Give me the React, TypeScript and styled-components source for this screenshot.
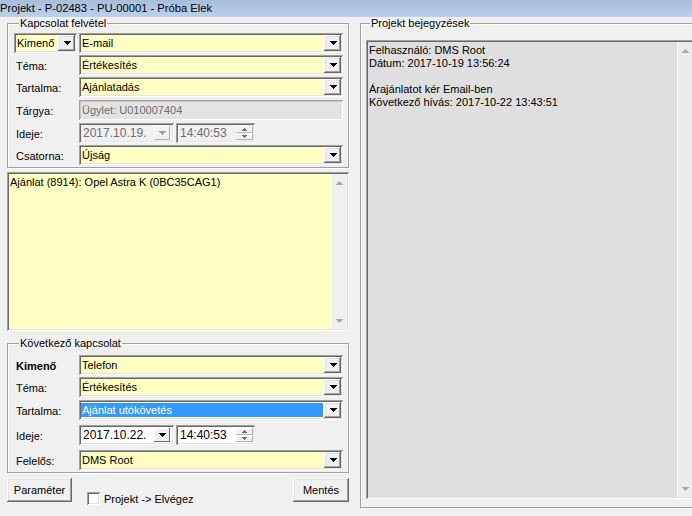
import styled, { createGlobalStyle, css } from "styled-components";

const GlobalStyle = createGlobalStyle`
  html, body {
    margin: 0;
    padding: 0;
    background: #f0f0f0;
  }
  body {
    font-family: "Liberation Sans", Arial, sans-serif;
    font-size: 11px;
    color: #000;
  }
  * {
    box-sizing: border-box;
  }
`;

const sunken = css`
  box-shadow:
    inset 1px 1px 0 #a0a0a0,
    inset -1px -1px 0 #ffffff,
    inset 2px 2px 0 #696969,
    inset -2px -2px 0 #e3e3e3;
`;

const raised = css`
  box-shadow:
    inset -1px -1px 0 #696969,
    inset 1px 1px 0 #ffffff,
    inset -2px -2px 0 #a0a0a0,
    inset 2px 2px 0 #e3e3e3;
`;

const YELLOW = "#ffffc4";

function Arrow({ dir = "down", color = "#000" }: { dir?: "down" | "up"; color?: string }) {
  const d = "M0 0h7v1h-1v1h-1v1h-1v1h-1v-1h-1v-1h-1v-1h-1z";
  return (
    <svg width="7" height="4" viewBox="0 0 7 4" style={dir === "up" ? { transform: "scaleY(-1)" } : undefined}>
      <path d={d} fill={color} />
    </svg>
  );
}

function TinyArrow({ dir }: { dir: "up" | "down" }) {
  return (
    <svg width="5" height="3" viewBox="0 0 5 3">
      <path d={dir === "up" ? "M2 0h1v1h1v1h1v1H0V2h1V1h1z" : "M0 0h5v1H4v1H3v1H2V2H1V1H0z"} fill="#6d6d6d" />
    </svg>
  );
}

function ComboBox({ value, selected, width }: { value: string; selected?: boolean; width?: number }) {
  return (
    <Combo $width={width}>
      <ComboText $selected={selected}>{value}</ComboText>
      <DropButton>
        <Arrow />
      </DropButton>
    </Combo>
  );
}

function DateTime({ date, time, disabled }: { date: string; time: string; disabled?: boolean }) {
  return (
    <DateRow>
      <DateBox $disabled={disabled}>
        <FieldText>{date}</FieldText>
        <SmallDrop $disabled={disabled}>
          <Arrow color={disabled ? "#a0a0a0" : "#000"} />
        </SmallDrop>
      </DateBox>
      <TimeBox $disabled={disabled}>
        <FieldText>{time}</FieldText>
        <Spin>
          <SpinButton>
            <TinyArrow dir="up" />
          </SpinButton>
          <SpinButton>
            <TinyArrow dir="down" />
          </SpinButton>
        </Spin>
      </TimeBox>
    </DateRow>
  );
}

function ScrollBar({ light }: { light?: boolean }) {
  return (
    <ScrollTrack $light={light}>
      <Arrow dir="up" color="#a8a8a8" />
      <Arrow color="#a8a8a8" />
    </ScrollTrack>
  );
}

export default function App() {
  return (
    <Window>
      <GlobalStyle />
      <TitleBar>Projekt - P-02483 - PU-00001 - Próba Elek</TitleBar>
      <Body>
        <LeftColumn>
          <Group $padTop={3} $padBottom={2}>
            <Caption>Kapcsolat felvétel</Caption>
            <Row>
              <LabelCell>
                <ComboBox value="Kimenő" width={63} />
              </LabelCell>
              <ComboBox value="E-mail" />
            </Row>
            <Row $top={2}>
              <Label>Téma:</Label>
              <ComboBox value="Értékesítés" />
            </Row>
            <Row $top={2}>
              <Label>Tartalma:</Label>
              <ComboBox value="Ajánlatadás" />
            </Row>
            <Row $top={3}>
              <Label>Tárgya:</Label>
              <ReadOnlyField>Ügylet: U010007404</ReadOnlyField>
            </Row>
            <Row $top={3}>
              <Label>Ideje:</Label>
              <DateTime date="2017.10.19." time="14:40:53" disabled />
            </Row>
            <Row $top={2}>
              <Label>Csatorna:</Label>
              <ComboBox value="Újság" />
            </Row>
          </Group>

          <Memo $bg={YELLOW} $height={159}>
            <MemoText>Ajánlat (8914): Opel Astra K (0BC35CAG1)</MemoText>
            <ScrollBar />
          </Memo>

          <Group $top={6} $padTop={5} $padBottom={2}>
            <Caption>Következő kapcsolat</Caption>
            <Row>
              <Label $bold>Kimenő</Label>
              <ComboBox value="Telefon" />
            </Row>
            <Row $top={2}>
              <Label>Téma:</Label>
              <ComboBox value="Értékesítés" />
            </Row>
            <Row $top={3}>
              <Label>Tartalma:</Label>
              <ComboBox value="Ajánlat utókövetés" selected />
            </Row>
            <Row $top={5}>
              <Label>Ideje:</Label>
              <DateTime date="2017.10.22." time="14:40:53" />
            </Row>
            <Row $top={5}>
              <Label>Felelős:</Label>
              <ComboBox value="DMS Root" />
            </Row>
          </Group>

          <ButtonBar>
            <PushButton $width={65}>Paraméter</PushButton>
            <CheckItem>
              <CheckBox />
              Projekt -&gt; Elvégez
            </CheckItem>
            <PushButton $width={56}>Mentés</PushButton>
          </ButtonBar>
        </LeftColumn>

        <RightGroup $padTop={10} $padBottom={8}>
          <Caption>Projekt bejegyzések</Caption>
          <Memo $bg="#dfdfdf" $fill>
            <MemoText>
              Felhasználó: DMS Root
              <br />
              Dátum: 2017-10-19 13:56:24
              <br />
              <br />
              Árajánlatot kér Email-ben
              <br />
              Következő hívás: 2017-10-22 13:43:51
            </MemoText>
            <ScrollBar light />
          </Memo>
        </RightGroup>
      </Body>
    </Window>
  );
}

const Window = styled.div`
  width: 692px;
  height: 516px;
  overflow: hidden;
  display: flex;
  flex-direction: column;
  background: #f0f0f0;
`;

const TitleBar = styled.div`
  height: 17px;
  line-height: 16px;
  font-size: 11.2px;
  white-space: nowrap;
  background: linear-gradient(#a6bedc, #bcd0e9);
`;

const Body = styled.div`
  flex: 1;
  display: flex;
  padding-left: 7px;
  gap: 11px;
  overflow: hidden;
`;

const LeftColumn = styled.div`
  width: 342px;
  flex-shrink: 0;
  display: flex;
  flex-direction: column;
`;

const Group = styled.fieldset<{ $top?: number; $padTop: number; $padBottom: number }>`
  margin: ${(p) => p.$top ?? 0}px 0 0 0;
  padding: ${(p) => p.$padTop}px 5px ${(p) => p.$padBottom}px 7px;
  min-inline-size: 0;
  border: 1px solid #a0a0a0;
  box-shadow: inset 1px 1px 0 #fff, 1px 1px 0 #fff;
`;

const RightGroup = styled(Group)`
  width: 341px;
  flex-shrink: 0;
  display: flex;
  flex-direction: column;
  padding-left: 5px;
  margin-bottom: 8px;
`;

const Caption = styled.legend`
  margin-left: 4px;
  padding: 0 1px;
  line-height: 13px;
  color: #000;
`;

const Row = styled.div<{ $top?: number }>`
  display: flex;
  align-items: center;
  height: 20px;
  margin-top: ${(p) => p.$top ?? 0}px;
`;

const Label = styled.div<{ $bold?: boolean }>`
  width: 64px;
  flex-shrink: 0;
  padding-left: 1px;
  padding-top: 2px;
  font-weight: ${(p) => (p.$bold ? 700 : 400)};
`;

const LabelCell = styled.div`
  width: 64px;
  flex-shrink: 0;
  margin-left: -1px;
  margin-right: 1px;
`;

const Combo = styled.div<{ $width?: number }>`
  display: flex;
  height: 20px;
  padding: 2px;
  background: ${YELLOW};
  ${sunken};
  ${(p) => (p.$width ? `width: ${p.$width}px;` : "flex: 1;")}
`;

const ComboText = styled.div<{ $selected?: boolean }>`
  flex: 1;
  margin: 1px 1px 1px 0;
  padding-left: 1px;
  line-height: 14px;
  white-space: nowrap;
  overflow: hidden;
  background: ${(p) => (p.$selected ? "#3399ff" : "transparent")};
  color: ${(p) => (p.$selected ? "#fff" : "#000")};
`;

const DropButton = styled.div`
  width: 17px;
  height: 16px;
  flex-shrink: 0;
  display: flex;
  align-items: center;
  justify-content: center;
  padding-left: 1px;
  background: #f0f0f0;
  ${raised};
`;

const ReadOnlyField = styled.div`
  flex: 1;
  height: 20px;
  padding: 3px 3px 0 3px;
  line-height: 14px;
  color: #6d6d6d;
  background: #e3e3e3;
  box-shadow: inset 1px 1px 0 #a0a0a0, inset -1px -1px 0 #fff, inset 2px 2px 0 #c8c8c8;
`;

const DateRow = styled.div`
  display: flex;
  gap: 2px;
`;

const DateBox = styled.div<{ $disabled?: boolean }>`
  width: 95px;
  height: 20px;
  display: flex;
  padding: 2px;
  background: ${(p) => (p.$disabled ? "#f0f0f0" : "#fff")};
  color: ${(p) => (p.$disabled ? "#6d6d6d" : "#000")};
  ${sunken};
`;

const TimeBox = styled(DateBox)`
  width: 79px;
`;

const FieldText = styled.div`
  flex: 1;
  padding: 1px 0 0 2px;
  line-height: 14px;
  font-size: 12px;
`;

const SmallDrop = styled.div<{ $disabled?: boolean }>`
  width: 16px;
  height: 14px;
  margin: 1px 2px 1px 0;
  display: flex;
  align-items: center;
  justify-content: center;
  background: #f0f0f0;
  box-shadow: inset -1px -1px 0 ${(p) => (p.$disabled ? "#b5b5b5" : "#696969")}, inset 1px 1px 0 #fff;
`;

const Spin = styled.div`
  width: 17px;
  display: flex;
  flex-direction: column;
  gap: 1px;
  margin: 1px 0;
`;

const SpinButton = styled.div`
  flex: 1;
  display: flex;
  align-items: center;
  justify-content: center;
  background: #f0f0f0;
  box-shadow: inset -1px -1px 0 #b5b5b5, inset 1px 1px 0 #fff;
`;

const Memo = styled.div<{ $bg: string; $height?: number; $fill?: boolean }>`
  display: flex;
  padding: 2px;
  margin-top: 4px;
  background: ${(p) => p.$bg};
  ${sunken};
  ${(p) => (p.$fill ? "flex: 1; margin-top: 0;" : `height: ${p.$height}px;`)}
`;

const MemoText = styled.div`
  flex: 1;
  padding: 2px 0 0 1px;
  line-height: 13px;
`;

const ScrollTrack = styled.div<{ $light?: boolean }>`
  width: 16px;
  display: flex;
  flex-direction: column;
  align-items: center;
  justify-content: space-between;
  padding: 7px 0 6px;
  background: ${(p) => (p.$light ? "#ececec" : "#f0f0f0")};
  box-shadow: inset 1px 0 0 #f8f8f8;
`;

const ButtonBar = styled.div`
  display: flex;
  align-items: flex-start;
  margin-top: 5px;
`;

const PushButton = styled.div<{ $width: number }>`
  width: ${(p) => p.$width}px;
  height: 24px;
  display: flex;
  align-items: center;
  justify-content: center;
  background: #f0f0f0;
  ${raised};
`;

const CheckItem = styled.div`
  flex: 1;
  display: flex;
  align-items: center;
  gap: 4px;
  margin: 14px 0 0 15px;
`;

const CheckBox = styled.div`
  width: 13px;
  height: 13px;
  background: #fff;
  ${sunken};
`;
